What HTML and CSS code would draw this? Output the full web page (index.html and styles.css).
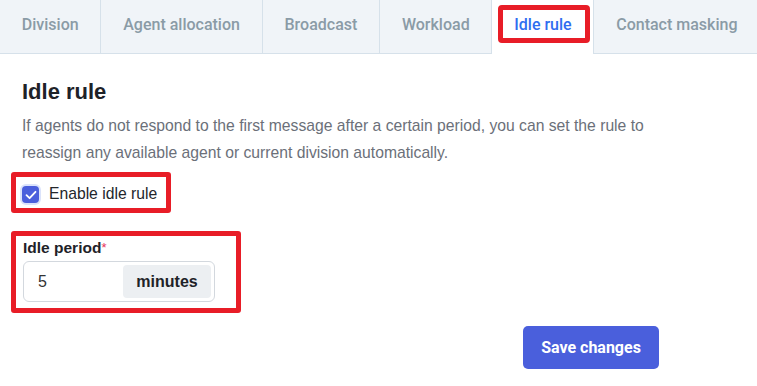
FILE: index.html
```html
<!DOCTYPE html>
<html>
<head>
<meta charset="utf-8">
<link rel="stylesheet" href="styles.css">
</head>
<body>
<nav class="tabs">
  <div class="tab">Division</div>
  <div class="tab">Agent allocation</div>
  <div class="tab">Broadcast</div>
  <div class="tab">Workload</div>
  <div class="tab active">Idle rule<span class="tab-mark"></span></div>
  <div class="tab">Contact masking</div>
</nav>
<main class="content">
  <h1 class="title">Idle rule</h1>
  <p class="desc">If agents do not respond to the first message after a certain period, you can set the rule to reassign any available agent or current division automatically.</p>
  <div class="mark check-mark">
    <label class="check-row">
      <span class="checkbox">
        <svg width="12" height="10" viewBox="0 0 12 10"><path d="M1.5 5.2 L4.6 8.2 L10.5 1.8" fill="none" stroke="#fff" stroke-width="1.8" stroke-linecap="round" stroke-linejoin="round"/></svg>
      </span>
      <span class="check-label">Enable idle rule</span>
    </label>
  </div>
  <div class="mark period-mark">
    <div class="field-label">Idle period<span class="req">*</span></div>
    <div class="input-group">
      <span class="input-value">5</span>
      <span class="addon">minutes</span>
    </div>
  </div>
  <div class="actions">
    <button class="save">Save changes</button>
  </div>
</main>
</body>
</html>
```

FILE: styles.css
```css
* { box-sizing: border-box; }
html, body { margin: 0; padding: 0; background: #fff; }
body { font-family: "Liberation Sans", Arial, sans-serif; width: 757px; height: 386px; overflow: hidden; }

.tabs {
  display: flex;
  background: #f0f4f8;
  border-bottom: 1px solid #d6e1ea;
  height: 54px;
  white-space: nowrap;
}
.tab {
  position: relative;
  flex: none;
  height: 53px;
  padding: 16px 21.8px 0 21.8px;
  border-right: 1px solid #d6e1ea;
  font-family: Roboto, sans-serif;
  font-weight: 500;
  font-size: 16px;
  line-height: 18.75px;
  color: #8a9ba6;
}
.tab.active {
  background: #fff;
  height: 54px;
  color: #2f6ef0;
}
.tab-mark {
  position: absolute;
  left: 6px;
  right: 3px;
  top: 5px;
  bottom: 11px;
  border: 5px solid #e81d27;
  border-radius: 4px;
}

.content { padding: 25px 22px 0 22px; }
.title {
  margin: 0;
  font-size: 22px;
  line-height: 26px;
  font-weight: 700;
  color: #1e2228;
}
.desc {
  margin: 7px 0 0 0;
  max-width: 660px;
  font-size: 15.7px;
  line-height: 27px;
  color: #6b7079;
}
.mark {
  border: 5px solid #e81d27;
  border-radius: 3px;
  margin-left: -11px;
}
.check-mark {
  margin-top: 6px;
  width: 160px;
  height: 41px;
  display: flex;
  align-items: center;
  padding: 3px 0 0 6px;
}
.check-row { display: flex; align-items: center; }
.checkbox {
  width: 17px;
  height: 17px;
  border-radius: 4px;
  background: #4a5fdc;
  box-shadow: 0 0 0 2px #dbe3fb;
  display: flex;
  align-items: center;
  justify-content: center;
  margin-top: 1px;
}
.check-label {
  margin-left: 10px;
  font-size: 15.7px;
  color: #23262b;
}
.period-mark {
  margin-top: 18px;
  width: 230px;
  height: 82px;
  padding: 3px 0 0 7px;
}
.field-label {
  font-size: 15.5px;
  font-weight: 700;
  line-height: 18px;
  color: #1e2228;
}
.req { color: #e8345a; font-weight: 400; font-size: 13px; vertical-align: top; }
.input-group {
  margin-top: 4px;
  width: 192px;
  height: 41px;
  border: 1px solid #d3d8de;
  border-radius: 6px;
  display: flex;
  align-items: stretch;
  padding: 3px 3px 3px 0;
}
.input-value {
  flex: 1;
  display: flex;
  align-items: center;
  padding-left: 14px;
  font-size: 16px;
  color: #333;
}
.addon {
  width: 88px;
  background: #eceff2;
  border-radius: 4px;
  display: flex;
  align-items: center;
  justify-content: center;
  font-size: 16px;
  font-weight: 700;
  color: #1e2228;
}
.actions {
  width: 637px;
  margin-top: 13px;
  display: flex;
  justify-content: flex-end;
}
.save {
  width: 136px;
  height: 43px;
  border: none;
  border-radius: 5px;
  background: #4a5fdc;
  color: #fff;
  font-family: Roboto, sans-serif;
  font-weight: 700;
  font-size: 16px;
  padding: 0;
}
```
